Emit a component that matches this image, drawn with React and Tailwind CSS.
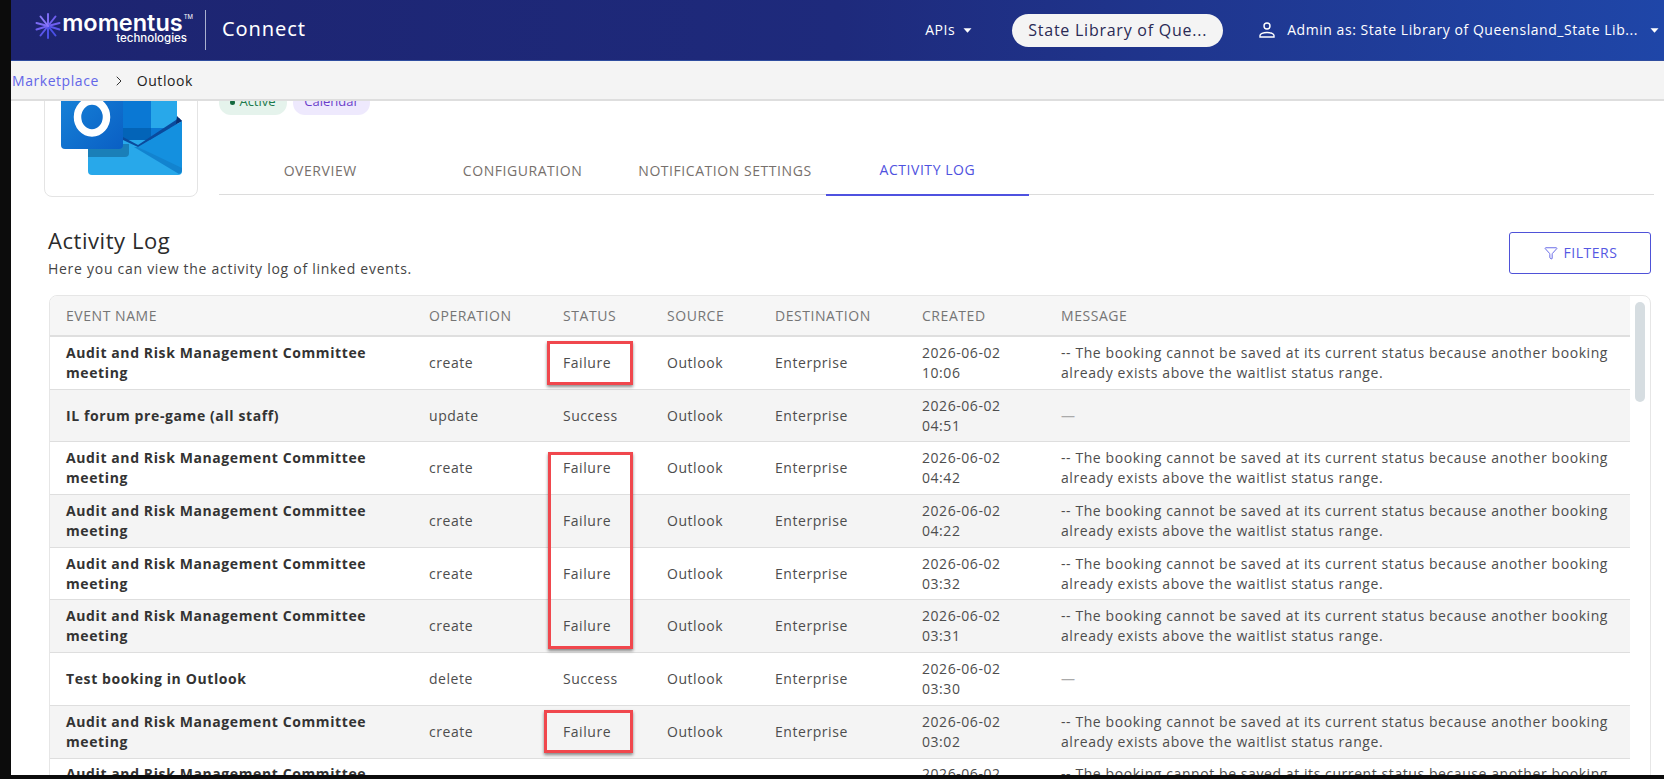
import { ChevronRight, Filter } from 'lucide-react';

const FAIL_MSG = '-- The booking cannot be saved at its current status because another booking already exists above the waitlist status range.';
const AUDIT = 'Audit and Risk Management Committee meeting';

const ROWS = [
  { name: AUDIT, op: 'create', status: 'Failure', created: '2026-06-02 10:06', message: FAIL_MSG },
  { name: 'IL forum pre-game (all staff)', op: 'update', status: 'Success', created: '2026-06-02 04:51', message: null },
  { name: AUDIT, op: 'create', status: 'Failure', created: '2026-06-02 04:42', message: FAIL_MSG },
  { name: AUDIT, op: 'create', status: 'Failure', created: '2026-06-02 04:22', message: FAIL_MSG },
  { name: AUDIT, op: 'create', status: 'Failure', created: '2026-06-02 03:32', message: FAIL_MSG },
  { name: AUDIT, op: 'create', status: 'Failure', created: '2026-06-02 03:31', message: FAIL_MSG },
  { name: 'Test booking in Outlook', op: 'delete', status: 'Success', created: '2026-06-02 03:30', message: null },
  { name: AUDIT, op: 'create', status: 'Failure', created: '2026-06-02 03:02', message: FAIL_MSG },
  { name: AUDIT, op: 'create', status: 'Failure', created: '2026-06-02 03:01', message: FAIL_MSG },
];

const COLS = ['Event name', 'Operation', 'Status', 'Source', 'Destination', 'Created', 'Message'];
const TABS = ['Overview', 'Configuration', 'Notification settings', 'Activity log'];

function Caret() {
  return (
    <svg width="9" height="5" viewBox="0 0 9 5" className="shrink-0">
      <path d="M0.5 0.2h8L4.5 4.8z" fill="#fff" />
    </svg>
  );
}

function LogoMark() {
  return (
    <svg width="26" height="26" viewBox="0 0 26 26" fill="none" strokeLinecap="round" strokeWidth="2" className="mb-[8px]">
      <path d="M13 13V1" stroke="#7c6cf5" />
      <path d="M13 13l7.5-9.5" stroke="#6f5ff0" />
      <path d="M13 13l11.5-3" stroke="#6f5ff0" />
      <path d="M13 13l11.5 3.5" stroke="#5a55ea" />
      <path d="M13 13l7.5 9.5" stroke="#4a4fe6" />
      <path d="M13 13v12" stroke="#4a4fe6" />
      <path d="M13 13l-7.5 9.5" stroke="#5a55ea" />
      <path d="M13 13L1.5 16.5" stroke="#6f5ff0" />
      <path d="M13 13L1.5 10" stroke="#7c6cf5" />
      <path d="M13 13L5.5 3.5" stroke="#8a78f8" />
    </svg>
  );
}

function OutlookIcon() {
  return (
    <svg width="126" height="132" viewBox="0 0 126 132" className="absolute left-[16px] top-0">
      <defs>
        <linearGradient id="tile" x1="0" y1="0" x2="1" y2="1">
          <stop offset="0" stopColor="#1784d9" />
          <stop offset="1" stopColor="#0a5fc4" />
        </linearGradient>
      </defs>
      {/* back panels */}
      <rect x="62" y="0" width="28" height="84" fill="#0a78d4" />
      <rect x="90" y="0" width="26" height="84" fill="#28a8ea" />
      <rect x="62" y="84" width="28" height="20" fill="#0364b8" />
      <rect x="90" y="84" width="20" height="12" fill="#0a78d4" />
      {/* envelope */}
      <rect x="27" y="96" width="94" height="35" rx="4" fill="#28a8ea" />
      <path d="M77 103L121 77v49z" fill="#1490df" />
      <path d="M73 103h4l44 21v3a4 4 0 0 1-3 3z" fill="#1283cf" />
      <path d="M118 74l3 3-44 26-15-7v-3l15 8z" fill="#0a4a9c" />
      <path d="M116 72l5 5-6 3z" fill="#0b2f70" />
      {/* shadow under the tile */}
      <path d="M27 100h41v9a4 4 0 0 1-4 4H27z" fill="#1a7fb8" />
      <rect x="0" y="43" width="62" height="62" rx="4" fill="url(#tile)" />
      <ellipse cx="31" cy="73" rx="14.5" ry="16" fill="none" stroke="#fff" strokeWidth="7.5" />
    </svg>
  );
}

function Highlight({ className }) {
  return <div className={`absolute border-[3px] border-[#f0474d] shadow-[0_2px_3px_rgba(0,0,0,0.45)] ${className}`} />;
}

export default function App() {
  return (
    <div className="relative h-[779px] overflow-hidden bg-[#0c0c0c] pl-[11px] pb-[4px] font-['Open_Sans',sans-serif] text-sm tracking-[0.55px]">
      <div className="flex h-full flex-col bg-white">
        {/* top bar */}
        <header className="flex h-[61px] shrink-0 items-center border-b border-[#2f4d9f] bg-gradient-to-r from-[#1d2470] via-[#1e2a7c] to-[#1f46a8] pl-[24px] text-white">
          <LogoMark />
          <div className="ml-[4px] flex w-[128px] flex-col items-end pb-[3px] font-['Inter',sans-serif] leading-none">
            <span className="text-[23.5px] font-semibold leading-[20px] tracking-normal">
              momentus<sup className="ml-px align-super text-[6px] font-normal leading-none">TM</sup>
            </span>
            <span className="-mt-px pr-[6px] text-[11.5px] font-medium leading-[12px] tracking-normal">technologies</span>
          </div>
          <div className="ml-[12px] h-[40px] w-px bg-[#aab0cf]" />
          <span className="ml-[16px] pb-[2px] font-['Noto_Sans',sans-serif] text-[20px] tracking-[0.9px]">Connect</span>

          <div className="ml-auto flex items-center gap-[8px]">
            <span>APIs</span>
            <Caret />
          </div>
          <div className="ml-[40px] flex h-[33px] w-[211px] items-center justify-center rounded-full bg-[#f4f4f4] text-[16px] tracking-[0.75px] text-[#2a2a55]">
            State Library of Que...
          </div>
          <svg width="18" height="18" viewBox="0 0 18 18" fill="none" stroke="#fff" strokeWidth="1.4" className="ml-[35px]">
            <circle cx="9" cy="5" r="3" />
            <path d="M2 16v-1.5C2 13 5 11.5 9 11.5s7 1.5 7 3V16z" />
          </svg>
          <span className="ml-[11px]">Admin as: State Library of Queensland_State Lib...</span>
          <div className="ml-[12px] mr-[5px]">
            <Caret />
          </div>
        </header>

        {/* breadcrumb */}
        <nav className="flex h-[40px] shrink-0 items-center border-b-2 border-[#dedede] bg-[#f4f4f4] pl-px pt-px">
          <span className="text-[#6366e8]">Marketplace</span>
          <ChevronRight size={16} strokeWidth={1.5} className="ml-[12px] text-[#333]" />
          <span className="ml-[10px] text-[#222]">Outlook</span>
        </nav>

        <main className="min-h-0 flex-1 overflow-hidden">
          {/* app summary, scrolled partly out of view */}
          <div className="-mt-[58px] flex pl-[33px] pr-[10px]">
            <div className="relative h-[154px] w-[154px] shrink-0 overflow-hidden rounded-lg border border-[#e4e4e4] bg-white">
              <OutlookIcon />
            </div>
            <div className="ml-[21px] flex-1">
              <h2 className="h-[48px] text-xl font-semibold text-[#222]">Outlook</h2>
              <div className="flex gap-[6px] text-xs tracking-normal">
                <span className="flex h-[24px] w-[68px] items-center justify-center gap-[4px] rounded-full bg-[#e5f3ec] pb-[2px] text-[13px] text-[#1d7a4d]">
                  <span className="h-[5px] w-[5px] rounded-full bg-[#14693f]" />
                  Active
                </span>
                <span className="flex h-[24px] w-[77px] items-center justify-center rounded-full bg-[#eee9fd] pb-[2px] text-[13px] text-[#6b3fc9]">
                  Calendar
                </span>
              </div>
              <div className="mt-[32px] flex h-[48px] border-b border-[#dcdcdc]">
                {TABS.map((tab) => {
                  const active = tab === 'Activity log';
                  return (
                    <div
                      key={tab}
                      className={`flex h-[49px] w-[202.4px] items-center justify-center pb-[2px] uppercase ${active ? 'border-b-2 border-[#4f52e0] text-[#4f52e0]' : 'text-[#77706c]'}`}
                    >
                      {tab}
                    </div>
                  );
                })}
              </div>
            </div>
          </div>

          {/* activity log */}
          <section className="mt-[29px] pl-[37px] pr-[13px]">
            <div className="flex h-[69px] items-start justify-between">
              <div>
                <h1 className="text-[22px] font-medium leading-[28px] text-[#2b2b2b]">Activity Log</h1>
                <p className="mt-[5px] leading-[20px] tracking-[0.72px] text-[#444]">Here you can view the activity log of linked events.</p>
              </div>
              <button
                type="button"
                className="mt-[6px] flex h-[42px] w-[142px] items-center justify-center gap-[5px] rounded-[3px] border border-[#4f52d8] pl-[2px] uppercase text-[#5558e3]"
              >
                <Filter size={14} strokeWidth={1.5} />
                Filters
              </button>
            </div>

            <div className="ml-px flex overflow-hidden rounded-t-lg border border-[#e6e6e6] bg-white">
              <div className="min-w-0 flex-1">
                <div className="grid h-[41px] grid-cols-[363px_134px_104px_108px_147px_139px_1fr] items-center border-b-2 border-[#dfdfdf] bg-[#f6f6f6] uppercase text-[#757575]">
                  {COLS.map((col) => (
                    <div key={col} className="pl-4">
                      {col}
                    </div>
                  ))}
                </div>
                {ROWS.map((row, i) => (
                  <div
                    key={i}
                    className={`grid h-[52.7px] grid-cols-[363px_134px_104px_108px_147px_139px_1fr] items-center border-b border-[#dedede] leading-[20px] text-[#4d4d4d] ${i % 2 === 1 ? 'bg-[#f4f4f4]' : 'bg-white'}`}
                  >
                    <div className="pl-4 pr-6 font-bold tracking-[0.6px] text-[#333]">{row.name}</div>
                    <div className="pl-4">{row.op}</div>
                    <div className="pl-4">{row.status}</div>
                    <div className="pl-4">Outlook</div>
                    <div className="pl-4">Enterprise</div>
                    <div className="pl-4 pr-6">{row.created}</div>
                    <div className="pl-4 pr-4 tracking-[0.58px]">
                      {row.message ?? <span className="text-[#aaa]">—</span>}
                    </div>
                  </div>
                ))}
              </div>
              <div className="w-[20px] shrink-0 pt-[6px]">
                <div className="ml-[5px] h-[100px] w-[10px] rounded-full bg-[#d6dde1]" />
              </div>
            </div>
          </section>
        </main>
      </div>

      {/* red annotation boxes drawn on top of the screenshot */}
      <Highlight className="left-[547px] top-[341px] h-[44px] w-[86px]" />
      <Highlight className="left-[548px] top-[452px] h-[197px] w-[85px]" />
      <Highlight className="left-[544px] top-[710px] h-[43px] w-[89px]" />
    </div>
  );
}
